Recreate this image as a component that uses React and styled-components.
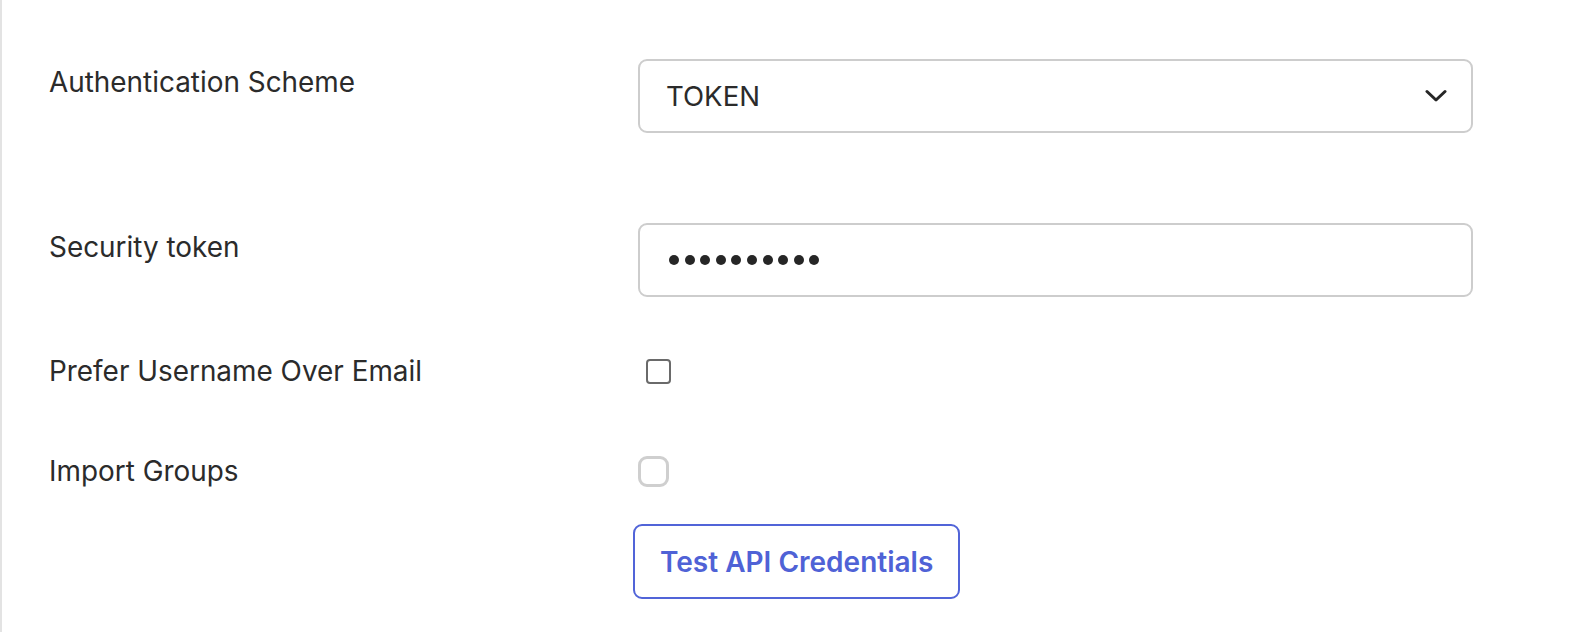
import React from 'react';
import styled, { createGlobalStyle } from 'styled-components';

const GlobalStyle = createGlobalStyle`
  html, body {
    margin: 0;
    padding: 0;
    background: #ffffff;
  }
  body {
    font-family: 'Inter', 'Noto Sans', sans-serif;
    color: #2b2b2b;
  }
`;

const Page = styled.div`
  width: 1570px;
  height: 632px;
  box-sizing: border-box;
  border-left: 2px solid #e3e3e3;
  padding: 59px 0 0 47px;
  display: flex;
  flex-direction: column;
`;

const Row = styled.div`
  display: grid;
  grid-template-columns: 589px 835px;
  align-items: ${props => (props.$center ? 'center' : 'start')};
  min-height: ${props => props.$height || 0}px;
  margin-bottom: ${props => props.$gap || 0}px;
`;

const Label = styled.div`
  font-size: 27.9px;
  line-height: 34px;
  padding-top: ${props => props.$offset || 0}px;
  color: #2b2b2b;
`;

const Field = styled.div`
  box-sizing: border-box;
  height: 74px;
  border: 2px solid #cdcdcd;
  border-radius: 9px;
  display: flex;
  align-items: center;
  justify-content: space-between;
  padding: 0 24px 0 26px;
  font-size: 27.6px;
  color: #2b2b2b;
`;

const Dots = styled.div`
  display: flex;
  gap: 5.6px;
  padding-left: 3px;
`;

const Dot = styled.span`
  width: 10px;
  height: 10px;
  border-radius: 50%;
  background: #262626;
`;

const Check = styled.span`
  display: block;
  box-sizing: border-box;
  width: ${props => (props.$muted ? 31 : 25)}px;
  height: ${props => (props.$muted ? 31 : 25)}px;
  margin-left: ${props => (props.$muted ? 0 : 8)}px;
  border: ${props => (props.$muted ? '3px solid #cfcfcf' : '2px solid #6a6a6a')};
  border-radius: ${props => (props.$muted ? 9 : 4)}px;
  background: #fff;
`;

const ButtonCell = styled.div`
  grid-column: 2;
  margin-left: -5px;
`;

const Button = styled.button`
  box-sizing: border-box;
  height: 75px;
  padding: 0 25px;
  border: 2px solid #5164d8;
  border-radius: 9px;
  background: #fff;
  color: #4f62d6;
  font-family: 'Inter', 'Noto Sans', sans-serif;
  font-size: 28px;
  font-weight: 600;
  cursor: pointer;
`;

function Chevron() {
  return (
    <svg width="22" height="14" viewBox="0 0 22 14" fill="none">
      <path d="M2 2.5 L11 11 L20 2.5" stroke="#262626" strokeWidth="3" strokeLinecap="round" strokeLinejoin="round" />
    </svg>
  );
}

export default function App() {
  return (
    <>
      <GlobalStyle />
      <Page>
        <Row $gap={90}>
          <Label $offset={6}>Authentication Scheme</Label>
          <Field>
            <span>TOKEN</span>
            <Chevron />
          </Field>
        </Row>
        <Row $gap={52}>
          <Label $offset={7}>Security token</Label>
          <Field>
            <Dots>
              {Array.from({ length: 10 }).map((_, i) => <Dot key={i} />)}
            </Dots>
          </Field>
        </Row>
        <Row $center $height={44} $gap={56}>
          <Label>Prefer Username Over Email</Label>
          <Check />
        </Row>
        <Row $center $height={44} $gap={31}>
          <Label>Import Groups</Label>
          <Check $muted />
        </Row>
        <Row>
          <ButtonCell>
            <Button>Test API Credentials</Button>
          </ButtonCell>
        </Row>
      </Page>
    </>
  );
}
